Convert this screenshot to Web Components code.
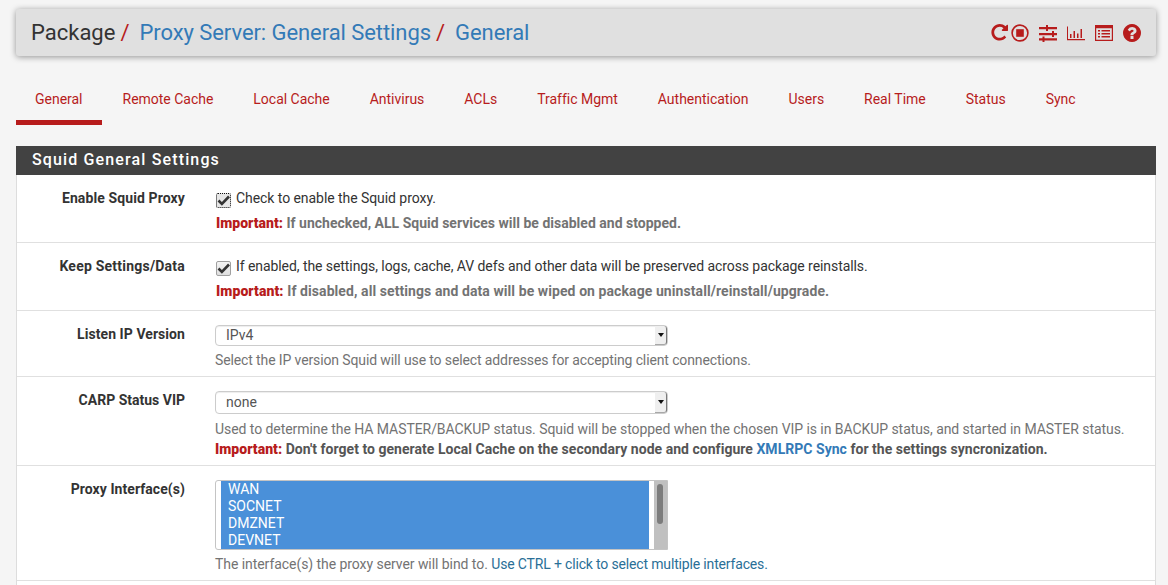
<!DOCTYPE html>
<html>
<head>
<meta charset="utf-8">
<title>Proxy Server: General Settings</title>
<style>
  html, body { margin: 0; padding: 0; height: 585px; overflow: hidden; background: #f5f5f5; }
  body { font: 14px/20px Roboto, "Liberation Sans", sans-serif; color: #333; }
</style>
</head>
<body>
<pf-page>
  <pf-breadcrumb>
    <span slot="crumbs">Package</span>
    <a slot="crumbs">Proxy Server: General Settings</a>
    <a slot="crumbs">General</a>
  </pf-breadcrumb>
  <pf-tabs></pf-tabs>
  <pf-panel heading="Squid General Settings">
    <pf-row label="Enable Squid Proxy" ls="0.11">
      <pf-check focused ls="-0.06">Check to enable the Squid proxy.</pf-check>
      <pf-help strong ls="0.01"><b>Important:</b> If unchecked, ALL Squid services will be disabled and stopped.</pf-help>
    </pf-row>
    <pf-row label="Keep Settings/Data" ls="0.22">
      <pf-check ls="-0.07">If enabled, the settings, logs, cache, AV defs and other data will be preserved across package reinstalls.</pf-check>
      <pf-help strong ls="0.08"><b>Important:</b> If disabled, all settings and data will be wiped on package uninstall/reinstall/upgrade.</pf-help>
    </pf-row>
    <pf-row label="Listen IP Version" short ls="0.06">
      <pf-select value="IPv4"></pf-select>
      <pf-help ls="-0.12">Select the IP version Squid will use to select addresses for accepting client connections.</pf-help>
    </pf-row>
    <pf-row label="CARP Status VIP" short>
      <pf-select value="none" tall></pf-select>
      <pf-help gap="5" ls="-0.06">Used to determine the HA MASTER/BACKUP status. Squid will be stopped when the chosen VIP is in BACKUP status, and started in MASTER status.</pf-help>
      <pf-help important ls="0.03"><b>Important:</b> Don't forget to generate Local Cache on the secondary node and configure <a>XMLRPC Sync</a> for the settings syncronization.</pf-help>
    </pf-row>
    <pf-row label="Proxy Interface(s)" short ls="0.06">
      <pf-listbox options="WAN,SOCNET,DMZNET,DEVNET"></pf-listbox>
      <pf-help ls="-0.06">The interface(s) the proxy server will bind to. <a class="note">Use CTRL + click to select multiple interfaces.</a></pf-help>
    </pf-row>
  </pf-panel>
</pf-page>

<script>
class PfPage extends HTMLElement {
  constructor() {
    super();
    this.attachShadow({mode: "open"}).innerHTML = `
      <style>
        :host { display: block; padding: 9px 12px 0 16px; height: 585px; box-sizing: border-box; overflow: hidden; }
      </style>
      <slot></slot>`;
  }
}

const ICONS = [
  `<svg width="18" height="18" viewBox="0 0 1664 1664" style="margin-right:-7px"><path transform="translate(0 -128)" d="M1664 256v448q0 26-19 45t-45 19h-448q-42 0-59-40-17-39 14-69l138-138q-148-137-349-137-104 0-198.500 40.500t-163.500 109.500-109.500 163.500-40.500 198.500 40.500 198.500 109.500 163.500 163.500 109.500 198.500 40.500q119 0 225-52t179-147q7-10 23-12 15 0 25 9l137 138q9 8 9.500 20.500t-7.500 22.500q-109 132-264 204.500t-327 72.500q-156 0-298-61t-245-164-164-245-61-298 61-298 164-245 245-164 298-61q147 0 284.500 55.500t244.500 156.500l130-129q29-31 70-14 39 17 39 59z"/></svg>`,
  `<svg width="18" height="18" viewBox="0 0 18 18"><circle cx="9" cy="9" r="7.9" fill="none" stroke="currentColor" stroke-width="1.6"/><rect x="5.2" y="5.2" width="7.6" height="7.6"/></svg>`,
  `<svg width="18" height="18" viewBox="0 0 18 18"><path d="M0 3h18v2.200H0zM0 9h18v2.200H0zM0 14.300h18v2.200H0z"/><path d="M7 1h2v6H7zM13 7h2v6h-2zM3.500 12.400h2v6h-2z"/></svg>`,
  `<svg width="18" height="18" viewBox="0 0 18 18"><path d="M0 2.500h1V15h17v1.200H0z"/><path d="M3 10h1.500v4H3zM6.500 7h1.500v7H6.500zM10 9.500h1.500V14H10zM13.500 5h1.500v9h-1.500z"/></svg>`,
  `<svg width="18" height="18" viewBox="0 0 18 18"><path fill-rule="evenodd" d="M0 1h18v16H0zM1.200 4.200v11.600h15.600V4.200z"/><path d="M3 6h2v1.500H3zM3 9h2v1.500H3zM3 12h2v1.500H3zM6.500 6h8.500v1.500H6.500zM6.500 9h8.500v1.500H6.500zM6.500 12h8.500v1.500H6.500z"/></svg>`,
  `<svg width="18" height="18" viewBox="128 128 1536 1536"><path d="M1024 1376v-192q0-14-9-23t-23-9h-192q-14 0-23 9t-9 23v192q0 14 9 23t23 9h192q14 0 23-9t9-23zm256-672q0-88-55.500-163t-138.500-116-170-41q-243 0-371 213-15 24 8 42l132 100q7 6 19 6 16 0 25-12 53-68 86-92 34-24 86-24 48 0 85.500 26t37.500 59q0 38-20 61t-68 45q-63 28-115.500 86.500t-52.500 125.500v36q0 14 9 23t23 9h192q14 0 23-9t9-23q0-19 21.500-49.500t54.500-49.500q32-18 49-28.500t46-35 44.500-48 28-60.500 12.500-81zm384 192q0 209-103 385.500t-279.500 279.500-385.500 103-385.500-103-279.500-279.500-103-385.500 103-385.500 279.500-279.500 385.500-103 385.500 103 279.500 279.500 103 385.500z"/></svg>`
];

class PfBreadcrumb extends HTMLElement {
  constructor() {
    super();
    this.attachShadow({mode: "open"});
  }
  connectedCallback() {
    const crumbs = [...this.querySelectorAll("[slot=crumbs]")].map(c => c.textContent);
    const html = crumbs.map((text, i) => {
      const sep = i < crumbs.length - 1 ? `<i>/</i>` : "";
      return i == 0 ? `<span>${text}</span>${sep}` : `<a>${text}</a>${sep}`;
    }).join("");
    this.shadowRoot.innerHTML = `
      <style>
        :host {
          display: flex; align-items: center; justify-content: space-between;
          height: 47px; padding: 0 15px; box-sizing: border-box;
          background: #e0e0e0; border-radius: 3px;
          box-shadow: 0 1px 6px rgba(0,0,0,.4);
        }
        h1 { margin: 0; font: 400 22px/30px Roboto, sans-serif; color: #333; display: flex; }
        a { color: #337ab7; letter-spacing: -0.07px; }
        i { font-style: normal; color: #b71c1c; margin: 0 10px 0 5px; }
        .icons { display: flex; gap: 10px; color: #b71c1c; align-items: center; }
        svg { display: block; fill: #b71c1c; }
      </style>
      <h1>${html}</h1>
      <div class="icons">${ICONS.join("")}</div>`;
  }
}

class PfTabs extends HTMLElement {
  constructor() {
    super();
    const names = ["General", "Remote Cache", "Local Cache", "Antivirus", "ACLs", "Traffic Mgmt",
      "Authentication", "Users", "Real Time", "Status", "Sync"];
    this.attachShadow({mode: "open"}).innerHTML = `
      <style>
        :host { display: flex; gap: 2px; margin-top: 24px; height: 45px; }
        a { padding: 9px 19px 0; height: 31px; color: #b71c1c; font-size: 14px; line-height: 20px; letter-spacing: -0.015px; }
        a.on { border-bottom: 5px solid #b71c1c; }
      </style>
      ${names.map((n, i) => `<a class="${i == 0 ? "on" : ""}">${n}</a>`).join("")}`;
  }
}

class PfPanel extends HTMLElement {
  constructor() {
    super();
    this.attachShadow({mode: "open"});
  }
  connectedCallback() {
    this.shadowRoot.innerHTML = `
      <style>
        :host { display: block; margin-top: 21px; height: 439px; background: #fff; border: 1px solid #ddd; border-width: 0 1px; width: 1140px; box-sizing: border-box; }
        h2 {
          margin: 0 -1px; height: 29px; padding: 0 16px; box-sizing: border-box;
          background: #424242; color: #fff; font: 500 16px/28px Roboto, sans-serif; letter-spacing: 1.14px;
        }
      </style>
      <h2>${this.getAttribute("heading")}</h2>
      <slot></slot>`;
  }
}

class PfRow extends HTMLElement {
  constructor() {
    super();
    this.attachShadow({mode: "open"});
  }
  connectedCallback() {
    const short = this.hasAttribute("short");
    const ls = this.getAttribute("ls") || 0;
    this.shadowRoot.innerHTML = `
      <style>
        :host {
          display: grid; grid-template-columns: 168px 1fr; column-gap: 30px;
          border-bottom: 1px solid #e0e0e0; padding: ${short ? "14px 0 6px" : "13px 0 9px"};
        }
        label { font-weight: 700; text-align: right; color: #333; letter-spacing: ${ls}px; ${short ? "margin-top: -1px;" : ""} }
        div { display: block; min-width: 0; }
      </style>
      <label>${this.getAttribute("label")}</label>
      <div><slot></slot></div>`;
  }
}

class PfCheck extends HTMLElement {
  constructor() {
    super();
    this.attachShadow({mode: "open"});
  }
  connectedCallback() {
    const focus = this.hasAttribute("focused");
    const ls = this.getAttribute("ls") || 0;
    this.shadowRoot.innerHTML = `
      <style>
        :host { display: flex; gap: 5px; height: 20px; line-height: 20px; color: #333; letter-spacing: ${ls}px; }
        .box {
          width: 15px; height: 15px; box-sizing: border-box; margin: 5px 0 0 1px;
          border: 1px ${focus ? "dotted #111" : "solid #a0a0a0"}; border-radius: 2px;
          background: ${focus ? "#e6e6e6" : "linear-gradient(#f4f4f4, #dedede)"}; flex: none;
        }
        svg { display: block; }
      </style>
      <span class="box"><svg width="13" height="13" viewBox="0 0 13 13"><path d="M1.500 6.500l3.400 3.400L12 2.500" fill="none" stroke="#333" stroke-width="2.600"/></svg></span>
      <span><slot></slot></span>`;
  }
}

class PfHelp extends HTMLElement {
  constructor() {
    super();
    this.attachShadow({mode: "open"});
  }
  connectedCallback() {
    const strong = this.hasAttribute("strong");
    const important = this.hasAttribute("important");
    const gap = this.getAttribute("gap") || (strong ? 5 : important ? 0 : 4);
    const ls = this.getAttribute("ls") || 0;
    // slotted b/a get their colours from the rules below, ::slotted reaches the light children
    this.shadowRoot.innerHTML = `
      <style>
        :host {
          display: block; margin-top: ${gap}px; line-height: 20px; letter-spacing: ${ls}px;
          padding-left: ${strong ? 1 : 0}px;
          color: ${important ? "#555" : "#737373"}; font-weight: ${strong || important ? 700 : 400};
        }
        ::slotted(b) { color: #b71c1c; }
        ::slotted(a) { color: #337ab7; }
        ::slotted(a.note) { color: #2a6f97; letter-spacing: -0.16px; }
      </style>
      <slot></slot>`;
  }
}

class PfSelect extends HTMLElement {
  constructor() {
    super();
    this.attachShadow({mode: "open"});
  }
  connectedCallback() {
    const h = this.hasAttribute("tall") ? 23 : 21;
    this.shadowRoot.innerHTML = `
      <style>
        :host {
          display: flex; align-items: center; justify-content: space-between;
          width: 453px; height: ${h}px; box-sizing: border-box;
          border: 1px solid #ccc; border-radius: 4px; background: #fff;
          box-shadow: inset 0 1px 1px rgba(0,0,0,.075); color: #555; padding-left: 10px;
        }
        span.txt { margin-top: -2px; }
        .btn {
          width: 12px; height: 100%; box-sizing: border-box; display: flex; align-items: center; justify-content: center;
          background: #efefef; border-right: 1px solid #7a7a7a; border-bottom: 1px solid #a8a8a8; border-radius: 0 3px 3px 0;
        }
        .btn::after { content: ""; border: 3px solid transparent; border-top: 4px solid #111; margin-top: 3px; }
      </style>
      <span class="txt">${this.getAttribute("value")}</span>
      <span class="btn"></span>`;
  }
}

class PfListbox extends HTMLElement {
  constructor() {
    super();
    this.attachShadow({mode: "open"});
  }
  connectedCallback() {
    const opts = this.getAttribute("options").split(",");
    this.shadowRoot.innerHTML = `
      <style>
        :host {
          display: flex; width: 453px; height: 70px; box-sizing: border-box;
          border: 1px solid #c4c4c4; border-radius: 3px 0 0 3px; background: #fff; padding-left: 5px; overflow: hidden;
        }
        .list { width: 429px; background: #4a90d9; color: #fff; padding-left: 7px; box-sizing: border-box; }
        .list div { height: 17px; line-height: 17px; }
        .bar { margin-left: 5px; width: 13px; background: #c0c0c0; position: relative; flex: none; }
        .thumb { position: absolute; left: 3px; top: 3px; width: 6px; height: 40px; background: #7c7c7c; border-radius: 3px; }
      </style>
      <div class="list">${opts.map(o => `<div>${o}</div>`).join("")}</div>
      <div class="bar"><div class="thumb"></div></div>`;
  }
}

customElements.define("pf-page", PfPage);
customElements.define("pf-breadcrumb", PfBreadcrumb);
customElements.define("pf-tabs", PfTabs);
customElements.define("pf-panel", PfPanel);
customElements.define("pf-row", PfRow);
customElements.define("pf-check", PfCheck);
customElements.define("pf-help", PfHelp);
customElements.define("pf-select", PfSelect);
customElements.define("pf-listbox", PfListbox);
</script>
</body>
</html>
